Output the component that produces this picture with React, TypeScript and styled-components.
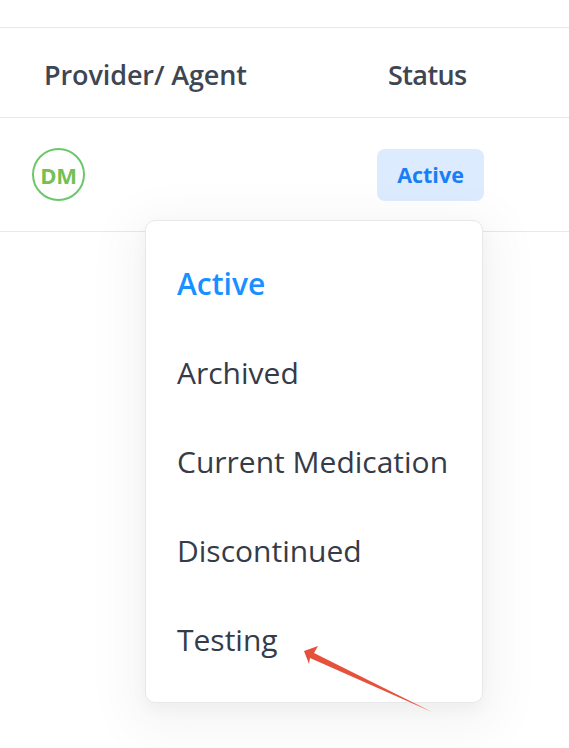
import React from "react";
import styled, { createGlobalStyle } from "styled-components";

const Global = createGlobalStyle`
  html, body { margin: 0; padding: 0; background: #ffffff; }
  body { font-family: "Open Sans", "Noto Sans", sans-serif; }
  * { box-sizing: border-box; }
`;

const Page = styled.div`
  position: relative;
  width: 569px;
  height: 748px;
  overflow: hidden;
  background: #fff;
  padding-top: 27px;
`;

const Table = styled.div`
  display: flex;
  flex-direction: column;
  border-top: 1px solid #e6e8ec;
`;

const Row = styled.div<{ $height: number; $shift?: number }>`
  display: grid;
  grid-template-columns: 345px 1fr;
  align-items: center;
  height: ${(p) => p.$height}px;
  padding-left: 32px;
  padding-top: ${(p) => p.$shift ?? 0}px;
  border-bottom: 1px solid #e6e8ec;
`;

const HeadCell = styled.div<{ $indent: number; $spacing?: number }>`
  padding-left: ${(p) => p.$indent}px;
  font-size: 27px;
  font-weight: 600;
  color: #3e4553;
  letter-spacing: ${(p) => p.$spacing ?? -0.1}px;
`;

const Avatar = styled.div`
  width: 53px;
  height: 53px;
  border-radius: 50%;
  border: 2px solid #6cc76a;
  display: flex;
  align-items: center;
  justify-content: center;
  font-size: 22px;
  font-weight: 700;
  color: #74c052;
  letter-spacing: -0.3px;
`;

const Badge = styled.span`
  display: inline-flex;
  align-items: center;
  justify-content: center;
  width: 107px;
  height: 52px;
  border-radius: 8px;
  background: #dcebfd;
  color: #1a7ff5;
  font-size: 21.5px;
  font-weight: 700;
`;

const Menu = styled.ul`
  position: absolute;
  left: 145px;
  top: 220px;
  width: 338px;
  margin: 0;
  padding: 18px 0;
  list-style: none;
  background: #fff;
  border: 1px solid #e6e8ec;
  border-radius: 10px;
  box-shadow: 0 12px 48px 18px rgba(0, 0, 0, 0.04),
    0 6px 16px 0 rgba(0, 0, 0, 0.04);
`;

const Item = styled.li<{ $active?: boolean }>`
  height: 89px;
  display: flex;
  align-items: center;
  padding-left: 31px;
  font-size: 30px;
  font-weight: ${(p) => (p.$active ? 600 : 500)};
  color: ${(p) => (p.$active ? "#1890ff" : "#353b47")};
`;

const Arrow = styled.svg`
  position: absolute;
  left: 0;
  top: 0;
  pointer-events: none;
`;

const items = ["Active", "Archived", "Current Medication", "Discontinued", "Testing"];

export default function App() {
  return (
    <>
      <Global />
      <Page>
        <Table>
          <Row $height={90} $shift={3}>
            <HeadCell $indent={12}>Provider/ Agent</HeadCell>
            <HeadCell $indent={11} $spacing={-0.6}>
              Status
            </HeadCell>
          </Row>
          <Row $height={114}>
            <div>
              <Avatar>DM</Avatar>
            </div>
            <div>
              <Badge>Active</Badge>
            </div>
          </Row>
        </Table>
        <Menu>
          {items.map((t, i) => (
            <Item key={t} $active={i === 0}>
              {t}
            </Item>
          ))}
        </Menu>
        <Arrow width="569" height="748" viewBox="0 0 569 748">
          <polygon
            points="304,651 318,646 314,653 432,712 310,658 309,664"
            fill="#e5513a"
          />
        </Arrow>
      </Page>
    </>
  );
}
